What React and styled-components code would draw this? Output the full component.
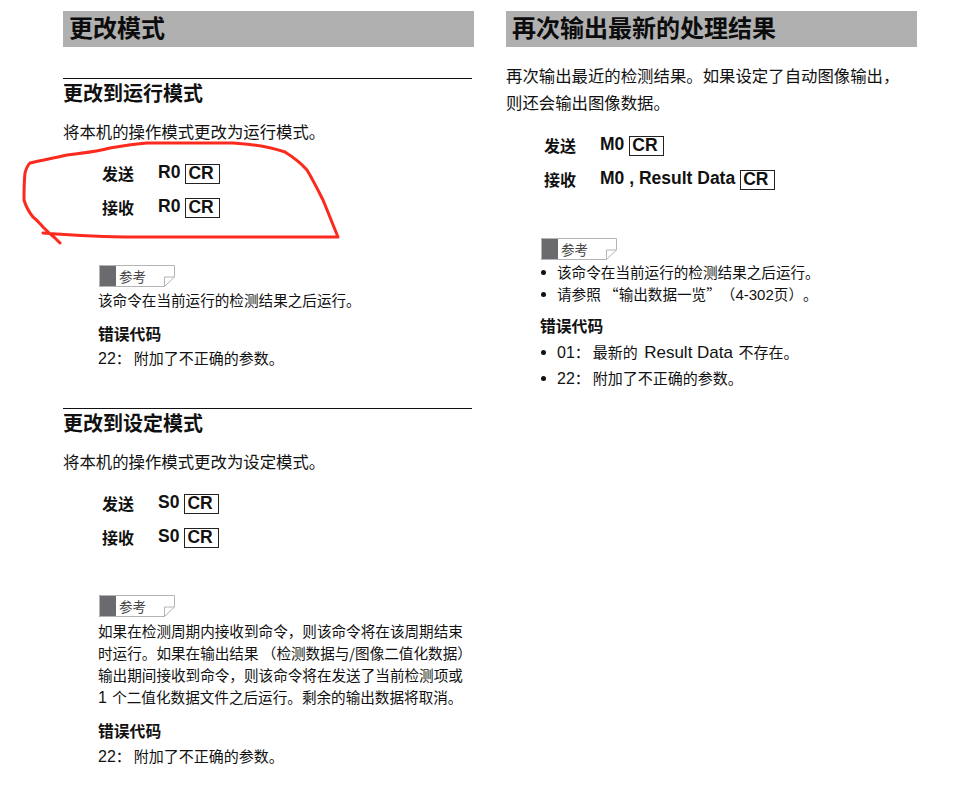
import React from 'react';
import styled, { createGlobalStyle } from 'styled-components';

const GlobalStyle = createGlobalStyle`
  html, body {
    margin: 0;
    padding: 0;
    background: #fff;
  }
  body {
    font-family: "Noto Sans CJK SC", "Liberation Sans", sans-serif;
    color: #111;
    text-spacing-trim: space-all;
  }
`;

const Page = styled.div`
  position: relative;
  width: 975px;
  height: 797px;
  overflow: hidden;
  display: grid;
  grid-template-columns: 411px 411px;
  column-gap: 32px;
  padding: 11px 0 0 63px;
  box-sizing: border-box;
`;

const Column = styled.div`
  display: flex;
  flex-direction: column;
  min-width: 0;
`;

const Latin = styled.span`
  font-family: "Liberation Sans", sans-serif;
  font-size: ${(p) => p.$size || 16}px;
  margin-left: ${(p) => p.$start || 0}px;
  margin-right: ${(p) => p.$end || 0}px;
`;

const Colon = styled.span`
  margin-right: 3px;
`;

const TitleBar = styled.h1`
  margin: 0;
  height: 36px;
  background: #b0b0b0;
  padding-left: 6px;
  font-size: 24px;
  line-height: 31px;
  font-weight: 700;
  color: #0c0c0c;
`;

const Section = styled.section`
  margin-top: ${(p) => p.$top}px;
  border-top: 1px solid #111;
  width: 409px;
`;

const SectionTitle = styled.h2`
  margin: 0;
  font-size: 20px;
  line-height: 28px;
  font-weight: 700;
`;

const Para = styled.p`
  margin: ${(p) => p.$top}px 0 0;
  font-size: 16.4px;
  line-height: 31px;
  white-space: nowrap;
`;

const Commands = styled.div`
  margin: ${(p) => p.$top}px 0 0 ${(p) => p.$left}px;
  display: flex;
  flex-direction: column;
  gap: ${(p) => p.$gap}px;
`;

const CommandRow = styled.div`
  display: flex;
  align-items: flex-start;
  height: 20px;
`;

const CommandLabel = styled.span`
  width: 56px;
  padding-top: 1px;
  font-size: 16px;
  line-height: 20px;
  font-weight: 700;
  flex: none;
`;

const CommandValue = styled.span`
  font-family: "Liberation Sans", sans-serif;
  font-size: 17.5px;
  line-height: 21px;
  font-weight: 700;
  white-space: pre;
`;

const CrBox = styled.span`
  margin-left: 5px;
  margin-top: 2px;
  width: 35px;
  height: 20px;
  box-sizing: border-box;
  border: 1px solid #222;
  padding-left: 2px;
  font-family: "Liberation Sans", sans-serif;
  font-size: 17.5px;
  line-height: 17px;
  font-weight: 700;
`;

const NoteTag = styled.div`
  margin: ${(p) => p.$top}px 0 0 ${(p) => p.$left}px;
  position: relative;
  width: 76px;
  height: 22px;
  display: flex;
`;

const NoteBlock = styled.span`
  width: 17px;
  height: 22px;
  background: #6b6b6f;
  flex: none;
`;

const NoteFrame = styled.svg`
  position: absolute;
  left: 0;
  top: 0;
`;

const NoteLabel = styled.span`
  padding-left: 3px;
  font-size: 13.5px;
  line-height: 22px;
  color: #444;
`;

const NoteText = styled.div`
  margin: ${(p) => p.$top || 0}px 0 0 ${(p) => p.$left}px;
  font-size: 14.6px;
  line-height: ${(p) => p.$line || 24}px;
  white-space: nowrap;
`;

const BulletList = styled.ul`
  margin: ${(p) => p.$top || 0}px 0 0 35px;
  padding: 0;
  list-style: none;
`;

const Bullet = styled.li`
  position: relative;
  padding-left: 16px;
  font-size: ${(p) => p.$size}px;
  line-height: ${(p) => p.$line}px;
  white-space: nowrap;

  &::before {
    content: '';
    position: absolute;
    left: 0;
    top: ${(p) => p.$line / 2 - 2}px;
    width: 5px;
    height: 5px;
    border-radius: 50%;
    background: #111;
  }
`;

const ErrorTitle = styled.h3`
  margin: ${(p) => p.$top}px 0 0 ${(p) => p.$left}px;
  font-size: 15.8px;
  line-height: 22px;
  font-weight: 700;
`;

const ErrorText = styled.div`
  margin: ${(p) => p.$top}px 0 0 ${(p) => p.$left}px;
  font-size: 15px;
  line-height: 22px;
  white-space: nowrap;
`;

const Scribble = styled.svg`
  position: absolute;
  left: 0;
  top: 0;
  pointer-events: none;
`;

const Note = ({ top, left }) => (
  <NoteTag $top={top} $left={left}>
    <NoteBlock />
    <NoteFrame width="76" height="22" viewBox="0 0 76 22" fill="none">
      <path d="M.5.5H75.5V12L65.5 21.5H.5Z" stroke="#b4b4b4" />
      <path d="M75.5 12H65.5V21.5" stroke="#b4b4b4" />
    </NoteFrame>
    <NoteLabel>参考</NoteLabel>
  </NoteTag>
);

const Command = ({ label, value }) => (
  <CommandRow>
    <CommandLabel>{label}</CommandLabel>
    <CommandValue>{value}</CommandValue>
    <CrBox>CR</CrBox>
  </CommandRow>
);

const App = () => (
  <Page>
    <GlobalStyle />
    <Column>
      <TitleBar>更改模式</TitleBar>

      <Section $top={31}>
        <SectionTitle>更改到运行模式</SectionTitle>
        <Para $top={9}>将本机的操作模式更改为运行模式。</Para>
        <Commands $top={15} $left={39} $gap={14}>
          <Command label="发送" value="R0" />
          <Command label="接收" value="R0" />
        </Commands>
        <Note top={49} left={36} />
        <NoteText $top={1} $left={35}>该命令在当前运行的检测结果之后运行。</NoteText>
        <ErrorTitle $top={11} $left={35}>错误代码</ErrorTitle>
        <ErrorText $top={2} $left={35}><Latin>22</Latin><Colon>：</Colon>附加了不正确的参数。</ErrorText>
      </Section>

      <Section $top={38}>
        <SectionTitle>更改到设定模式</SectionTitle>
        <Para $top={9}>将本机的操作模式更改为设定模式。</Para>
        <Commands $top={15} $left={39} $gap={14}>
          <Command label="发送" value="S0" />
          <Command label="接收" value="S0" />
        </Commands>
        <Note top={49} left={36} />
        <NoteText $top={3} $left={35} $line={22}>如果在检测周期内接收到命令，则该命令将在该周期结束</NoteText>
        <NoteText $left={35} $line={22}>时运行。如果在输出结果 （检测数据与/图像二值化数据）</NoteText>
        <NoteText $left={35} $line={22}>输出期间接收到命令，则该命令将在发送了当前检测项或</NoteText>
        <NoteText $left={35} $line={22}><Latin $end={2}>1</Latin> 个二值化数据文件之后运行。剩余的输出数据将取消。</NoteText>
        <ErrorTitle $top={11} $left={35}>错误代码</ErrorTitle>
        <ErrorText $top={3} $left={35}><Latin>22</Latin><Colon>：</Colon>附加了不正确的参数。</ErrorText>
      </Section>
    </Column>

    <Column>
      <TitleBar>再次输出最新的处理结果</TitleBar>
      <Para $top={13}>再次输出最近的检测结果。如果设定了自动图像输出，</Para>
      <Para $top={-4}>则还会输出图像数据。</Para>
      <Commands $top={16} $left={38} $gap={14}>
        <Command label="发送" value="M0" />
        <Command label="接收" value="M0 , Result Data" />
      </Commands>
      <Note top={50} left={35} />
      <BulletList>
        <Bullet $size={14.6} $line={24}>该命令在当前运行的检测结果之后运行。</Bullet>
        <Bullet $size={14.6} $line={20}>请参照 “输出数据一览”（<Latin $size={15}>4-302</Latin>页）。</Bullet>
      </BulletList>
      <ErrorTitle $top={10} $left={34}>错误代码</ErrorTitle>
      <BulletList $top={2}>
        <Bullet $size={15} $line={25}><Latin>01</Latin><Colon>：</Colon>最新的 <Latin $size={17} $start={3} $end={2}>Result Data</Latin> 不存在。</Bullet>
        <Bullet $size={15} $line={25}><Latin>22</Latin><Colon>：</Colon>附加了不正确的参数。</Bullet>
      </BulletList>
    </Column>

    <Scribble width="975" height="797" viewBox="0 0 975 797" fill="none">
      <path
        d="M43 233C70 235 100 237 133 237L338 237C333 225 328 212 323 200C318 190 313 180 307 170C300 162 293 157 285 152C268 146 250 144 233 143L147 143C135 144 122 146 110 148C96 152 82 153 67 155C55 158 42 160 30 163C27 166 26 169 25 173C24 182 24 191 24 200C26 207 29 212 33 217C37 220 40 224 43 227C47 231 51 235 55 238L60 243"
        stroke="#fb2a1e"
        strokeWidth="3"
        strokeLinecap="round"
        strokeLinejoin="round"
      />
    </Scribble>
  </Page>
);

export default App;
